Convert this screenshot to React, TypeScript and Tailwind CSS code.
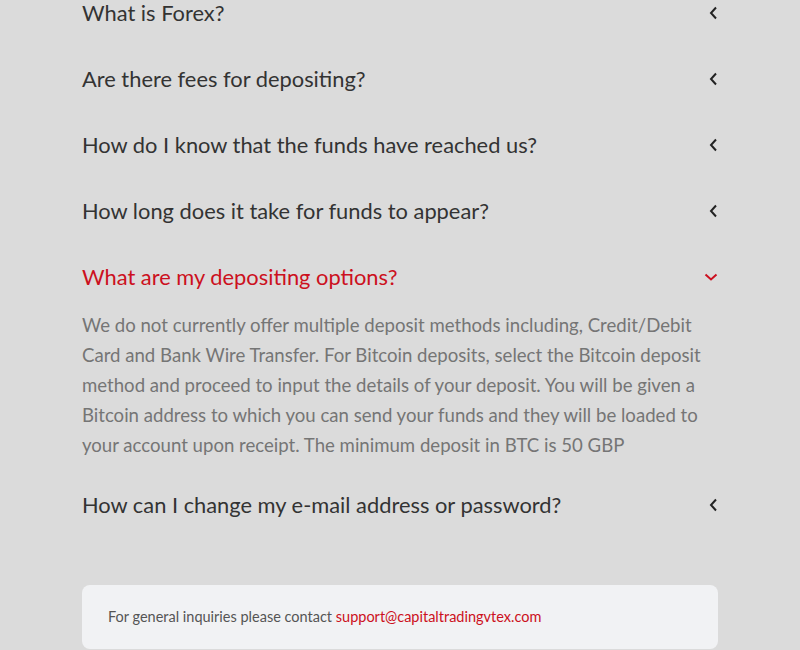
import { useState } from 'react';

const faqs = [
  { q: 'What is Forex?', a: '' },
  { q: 'Are there fees for depositing?', a: '' },
  { q: 'How do I know that the funds have reached us?', a: '' },
  { q: 'How long does it take for funds to appear?', a: '' },
  {
    q: 'What are my depositing options?',
    a: 'We do not currently offer multiple deposit methods including, Credit/Debit Card and Bank Wire Transfer. For Bitcoin deposits, select the Bitcoin deposit method and proceed to input the details of your deposit. You will be given a Bitcoin address to which you can send your funds and they will be loaded to your account upon receipt. The minimum deposit in BTC is 50 GBP',
  },
  { q: 'How can I change my e-mail address or password?', a: '' },
];

function Chevron({ open }: { open: boolean }) {
  if (open) {
    return (
      <svg width="14" height="10" viewBox="0 0 14 10" className="text-[#cc1020]">
        <path d="M1.5 2.5 L7 7.5 L12.5 2.5" fill="none" stroke="currentColor" strokeWidth="2" />
      </svg>
    );
  }
  return (
    <svg width="10" height="14" viewBox="0 0 10 14" className="text-[#222222]">
      <path d="M8 1.5 L3 7 L8 12.5" fill="none" stroke="currentColor" strokeWidth="2" />
    </svg>
  );
}

export default function App() {
  const [openIdx, setOpenIdx] = useState(4);

  return (
    <div className="min-h-screen bg-[#dbdbdb] font-['Lato',sans-serif] overflow-hidden">
      <div className="w-[636px] mx-auto -mt-5">
        {faqs.map((f, i) => {
          const open = i === openIdx;
          return (
            <div key={f.q}>
              <button
                onClick={() => setOpenIdx(open ? -1 : i)}
                className="w-full flex items-center justify-between py-4 text-left"
              >
                <span className={`text-[21.85px] leading-[34px] ${open ? 'text-[#cc1020]' : 'text-[#333333]'}`}>
                  {f.q}
                </span>
                <span className="w-[14px] flex justify-end">
                  <Chevron open={open} />
                </span>
              </button>
              {open && (
                <p className="text-[18.6px] leading-[30px] text-[#757575] pb-3">{f.a}</p>
              )}
            </div>
          );
        })}

        <div className="mt-[47px] bg-[#f1f2f4] rounded-lg px-[26px] py-[22px] text-[14.5px] leading-[20px] text-[#555555]">
          For general inquiries please contact{' '}
          <a href="#" className="text-[#cc1020]">support@capitaltradingvtex.com</a>
        </div>
      </div>
    </div>
  );
}
